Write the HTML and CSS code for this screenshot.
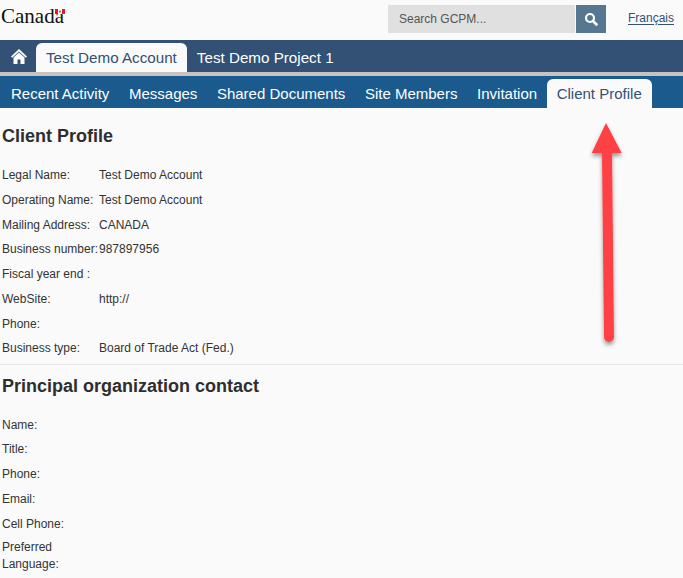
FILE: index.html
```html
<!DOCTYPE html>
<html lang="en">

<head>
    <meta charset="UTF-8">
    <title>Client Profile</title>
    <link rel="stylesheet" href="styles.css">
</head>

<body>
    <div id="top">
        <div class="logo">
            <span>Canada</span>
            <svg class="flag" width="10" height="5" viewBox="0 0 10 5">
                <rect width="10" height="5" fill="#fff"/>
                <rect width="3" height="5" fill="#e01b24"/>
                <rect x="7" width="3" height="5" fill="#e01b24"/>
                <path d="M5 .8 6 3 5 3.800 4 3z" fill="#e01b24"/>
            </svg>
        </div>
        <div class="search">
            <div class="search-box">Search GCPM...</div>
            <div class="search-btn">
                <svg width="14" height="14" viewBox="0 0 14 14">
                    <circle cx="6" cy="6" r="4" fill="none" stroke="#fff" stroke-width="2.200"/>
                    <path d="M9 9 12.500 12.500" stroke="#fff" stroke-width="2.600" stroke-linecap="round"/>
                </svg>
            </div>
        </div>
        <a class="lang">Français</a>
    </div>

    <div id="tabs">
        <svg class="home" width="16" height="15" viewBox="0 0 16 15">
            <path d="M8 0 16 7.500 14.800 8.700 8 2.500 1.200 8.700 0 7.500z" fill="#fff"/>
            <path d="M2.500 8.500 8 3.500 13.500 8.500V15H9.500V10.500H6.500V15H2.500z" fill="#fff"/>
        </svg>
        <div class="tab active">Test Demo Account</div>
        <div class="tab">Test Demo Project 1</div>
    </div>

    <div id="nav">
        <div class="item">Recent Activity</div>
        <div class="item">Messages</div>
        <div class="item">Shared Documents</div>
        <div class="item">Site Members</div>
        <div class="item">Invitation</div>
        <div class="item active">Client Profile</div>
    </div>

    <div id="main">
        <h2>Client Profile</h2>
        <div class="row"><label>Legal Name:</label><span>Test Demo Account</span></div>
        <div class="row"><label>Operating Name:</label><span>Test Demo Account</span></div>
        <div class="row"><label>Mailing Address:</label><span>CANADA</span></div>
        <div class="row"><label>Business number:</label><span>987897956</span></div>
        <div class="row"><label>Fiscal year end :</label><span></span></div>
        <div class="row"><label>WebSite:</label><span>http://</span></div>
        <div class="row"><label>Phone:</label><span></span></div>
        <div class="row"><label>Business type:</label><span>Board of Trade Act (Fed.)</span></div>
        <hr>
        <h2>Principal organization contact</h2>
        <div class="row"><label>Name:</label><span></span></div>
        <div class="row"><label>Title:</label><span></span></div>
        <div class="row"><label>Phone:</label><span></span></div>
        <div class="row"><label>Email:</label><span></span></div>
        <div class="row"><label>Cell Phone:</label><span></span></div>
        <div class="row tall"><label>Preferred Language:</label><span></span></div>
    </div>

    <svg class="arrow" width="40" height="240" viewBox="0 0 40 240">
        <defs>
            <filter id="shadow" x="-30%" y="-5%" width="160%" height="110%">
                <feDropShadow dx="0" dy="3" stdDeviation="2" flood-color="#000" flood-opacity=".4"/>
            </filter>
        </defs>
        <g filter="url(#shadow)">
            <path d="M20 13 5.700 43H16L18 227a5 5 0 0 0 10 0L26 43H35.700z" fill="#ff4045"/>
        </g>
    </svg>
</body>

</html>
```

FILE: styles.css
```css
* {
    padding: 0;
    margin: 0;
    box-sizing: border-box;
}

html,
body {
    width: 100%;
    height: 100%;
}

body {
    overflow: hidden;
    position: relative;
    background-color: #fafafa;
    color: #333;
    font-family: "Liberation Sans", Arial, sans-serif;
}

#top {
    height: 40px;
    display: flex;
    align-items: flex-start;
    padding-left: 1px;
}

.logo {
    position: relative;
    width: 66px;
    margin-top: 4px;
    font-family: "Liberation Serif", serif;
    font-size: 21px;
    line-height: 24px;
    color: #111;
}

.flag {
    position: absolute;
    left: 54px;
    top: 5px;
}

.search {
    display: flex;
    margin: 5px 0 0 321px;
}

.search-box {
    width: 187px;
    height: 28px;
    margin-right: 1px;
    padding-left: 11px;
    background-color: #e0e0e0;
    color: #555;
    font-size: 12px;
    line-height: 29px;
}

.search-btn {
    width: 30px;
    height: 28px;
    background-color: #56778f;
    display: flex;
    align-items: center;
    justify-content: center;
}

.lang {
    margin: 11px 0 0 22px;
    font-size: 12px;
    line-height: 14px;
    color: #335075;
    text-decoration: underline;
    text-underline-offset: 2px;
}

#tabs {
    height: 36px;
    padding-top: 3px;
    background-color: #335075;
    border-bottom: 4px solid;
    border-image: linear-gradient(#7f7f7f 0 50%, #c4c4c4 50%) 4;
    display: flex;
    align-items: flex-end;
}

.home {
    margin: 0 9px 8px 11px;
}

.tab {
    height: 29px;
    padding: 0 10px;
    font-size: 15.2px;
    line-height: 29px;
    color: #fff;
}

.tab.active {
    background-color: #fafafa;
    color: #335075;
    border-radius: 6px 6px 0 0;
}

#nav {
    height: 32px;
    padding-top: 3px;
    background-color: #1a5a8c;
    display: flex;
    padding-left: 1.2px;
}

.item {
    height: 29px;
    padding: 0 9.8px;
    font-size: 15px;
    line-height: 30px;
    color: #fff;
}

.item.active {
    background-color: #fafafa;
    color: #335075;
    border-radius: 6px 6px 0 0;
}

#main {
    padding-top: 18px;
}

h2 {
    margin-left: 2px;
    margin-bottom: 18px;
    font-size: 18px;
    line-height: 21px;
    color: #2e2e2e;
}

.row {
    display: flex;
    padding-left: 2px;
    height: 24.75px;
    font-size: 12px;
    line-height: 14px;
    padding-top: 3px;
}

.row label {
    width: 97px;
    flex-shrink: 0;
}

.row.tall {
    margin-top: 0.9px;
    padding-top: 0;
}

.row.tall label {
    width: 70px;
    line-height: 17px;
}

hr {
    border: 0;
    border-top: 1px solid #e6e6e6;
    margin: 1px 0 10.6px;
}

.arrow {
    position: absolute;
    left: 586px;
    top: 110px;
}
```
